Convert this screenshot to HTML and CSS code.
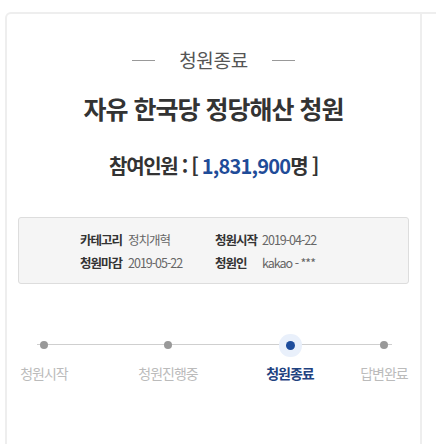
FILE: index.html
```html
<!DOCTYPE html>
<html lang="ko">
<head>
<meta charset="utf-8">
<link rel="stylesheet" href="styles.css">
</head>
<body>
<div class="page">
  <div class="card">
    <div class="status">
      <span class="status-line"></span>
      <span class="status-text">청원종료</span>
      <span class="status-line"></span>
    </div>
    <h1 class="title">자유 한국당 정당해산 청원</h1>
    <p class="count">참여인원 : [ <span class="count-num">1,831,900</span>명 ]</p>
    <div class="info">
      <span class="info-label">카테고리</span><span class="info-value">정치개혁</span>
      <span class="info-label">청원시작</span><span class="info-value">2019-04-22</span>
      <span class="info-label">청원마감</span><span class="info-value">2019-05-22</span>
      <span class="info-label">청원인</span><span class="info-value">kakao - ***</span>
    </div>
    <div class="timeline">
      <div class="timeline-line"></div>
      <div class="step">
        <span class="dot"></span>
        <span class="step-label">청원시작</span>
      </div>
      <div class="step">
        <span class="dot"></span>
        <span class="step-label">청원진행중</span>
      </div>
      <div class="step step-active">
        <span class="dot"></span>
        <span class="step-label">청원종료</span>
      </div>
      <div class="step">
        <span class="dot"></span>
        <span class="step-label">답변완료</span>
      </div>
    </div>
  </div>
  <div class="next"></div>
</div>
</body>
</html>
```

FILE: styles.css
```css
* { box-sizing: border-box; }
html, body { margin: 0; padding: 0; background: #fff; }
body {
  font-family: "Noto Sans CJK KR", "Noto Sans", sans-serif;
  color: #333;
  overflow: hidden;
}
.page {
  display: flex;
  padding-top: 12px;
  height: 444px;
}
.card {
  margin-left: 5px;
  width: 417px;
  height: 440px;
  border: 2px solid #eeeeee;
  border-bottom: none;
  border-top-left-radius: 6px;
  padding-top: 34px;
}
.next {
  flex: 1;
  border-top: 2px solid #eeeeee;
}
.status {
  display: flex;
  justify-content: center;
  align-items: center;
  gap: 24px;
  height: 24px;
}
.status-line {
  width: 23px;
  height: 1px;
  background: #999;
}
.status-text {
  font-size: 19px;
  line-height: 24px;
  color: #555;
  letter-spacing: -0.3px;
}
.title {
  margin: 20px 0 0;
  text-align: center;
  font-size: 25px;
  line-height: 32px;
  font-weight: 700;
  letter-spacing: -1px;
  color: #333;
}
.count {
  margin: 29px 0 0;
  text-align: center;
  font-size: 20px;
  line-height: 26px;
  font-weight: 700;
  letter-spacing: -1.3px;
  color: #333;
}
.count-num {
  color: #1f4c98;
  letter-spacing: -0.8px;
}
.info {
  margin: 38px 11px 0;
  height: 67px;
  border: 1px solid #dddddd;
  border-radius: 3px;
  background: #f5f5f5;
  padding: 10px 0 0 61px;
  display: grid;
  grid-template-columns: 48px 87px 47px auto;
  grid-auto-rows: 23px;
  align-items: center;
  font-size: 12.5px;
  letter-spacing: -1px;
}
.info-label {
  font-weight: 700;
  color: #333;
}
.info-value {
  color: #666;
}
.timeline {
  position: relative;
  margin-top: 49px;
  padding-left: 2px;
  display: grid;
  grid-template-columns: 124px 122px 94px 70px;
}
.timeline-line {
  position: absolute;
  left: 30px;
  width: 355px;
  top: 11px;
  height: 1px;
  background: #cfcfcf;
}
.step {
  width: 70px;
  display: flex;
  flex-direction: column;
  align-items: center;
}
.dot {
  position: relative;
  margin: 8px 0;
  width: 8px;
  height: 8px;
  border-radius: 50%;
  background: #999;
}
.step-active .dot {
  width: 9px;
  height: 9px;
  margin: 7.5px 0;
  background: #1d4c9c;
  box-shadow: 0 0 0 7px #e9f0fb;
}
.step-label {
  margin-top: 6px;
  font-size: 14px;
  line-height: 20px;
  letter-spacing: -1px;
  color: #bbbbbb;
  white-space: nowrap;
}
.step-active .step-label {
  font-weight: 700;
  color: #1f4280;
}
```
